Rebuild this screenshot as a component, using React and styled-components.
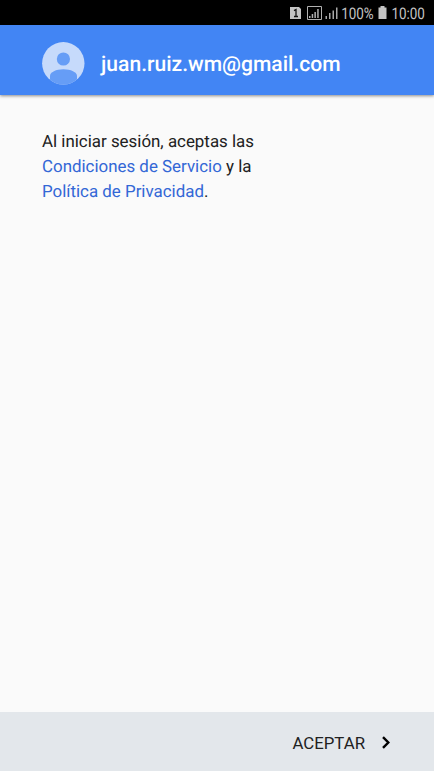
import styled, { createGlobalStyle } from "styled-components";

const GlobalStyle = createGlobalStyle`
    body {
        margin: 0;
        background: #fafafa;
        font-family: Roboto, "Liberation Sans", sans-serif;
    }
`;

const Container = styled.div`
    display: flex;
    flex-direction: column;
    height: 100vh;
    overflow: hidden;
    background: #fafafa;
    text-rendering: geometricPrecision;
`;

const StatusBar = styled.div`
    display: flex;
    align-items: center;
    justify-content: flex-end;
    flex-shrink: 0;
    box-sizing: border-box;
    height: 25px;
    padding: 1px 9px 0 0;
    background: #000;
    color: #c4c4c4;
`;

const StatusIcons = styled.svg`
    display: block;
    flex-shrink: 0;
    margin-right: ${(props) => props.$gap}px;
`;

const StatusText = styled.span`
    display: flex;
    flex-shrink: 0;
    justify-content: flex-end;
    width: ${(props) => props.$width}px;
    margin-right: ${(props) => props.$gap || 0}px;
    padding-top: 2px;
    font-size: 16px;
    line-height: 20px;
    white-space: nowrap;
`;

const Condensed = styled.span`
    flex-shrink: 0;
    transform: scaleX(0.84);
    transform-origin: right center;
`;

const Header = styled.header`
    display: flex;
    align-items: center;
    flex-shrink: 0;
    box-sizing: border-box;
    height: 70px;
    padding: 6px 42px 0;
    background: #4285f4;
    box-shadow: 0 1px 3px rgba(0, 0, 0, 0.45);
`;

const Avatar = styled.svg`
    display: block;
    margin-right: 16px;
`;

const Email = styled.h1`
    margin: 3px 0 0;
    font-size: 21.1px;
    font-weight: 500;
    line-height: 28px;
    color: #fff;
`;

const Content = styled.main`
    flex: 1;
    padding: 35px 42px;
`;

const Terms = styled.p`
    width: 230px;
    margin: 0;
    font-size: 16.9px;
    line-height: 25.2px;
    color: #212121;
`;

const Link = styled.a`
    color: #3367d6;
    text-decoration: none;
`;

const Footer = styled.footer`
    display: flex;
    align-items: center;
    justify-content: flex-end;
    flex-shrink: 0;
    box-sizing: border-box;
    height: 59px;
    padding: 2px 43px 0 0;
    background: #e3e7eb;
`;

const AcceptButton = styled.button`
    display: flex;
    align-items: center;
    gap: 16px;
    padding: 0;
    border: 0;
    background: none;
    font-family: inherit;
    font-size: 16.8px;
    line-height: 24px;
    color: #212121;
`;

const App = () => {
    return (
        <>
            <GlobalStyle />
            <Container>
                <StatusBar>
                    <StatusIcons $gap={2} width="48" height="16" viewBox="0 0 48 16">
                        <path d="M0 2h9l2 2v10H0z" fill="#c4c4c4" />
                        <path d="M4 5.6l2-1.1v7M4 11.5h4" fill="none" stroke="#111" strokeWidth="1.3" />
                        <path d="M17.5 1.5h14v13h-14z" fill="none" stroke="#b0b0b0" />
                        <path
                            d="M19 11h1.5v2H19zM21.7 9h1.5v4h-1.5zM24.4 7h1.5v6h-1.5zM27.2 4h1.5v9h-1.5z"
                            fill="#b0b0b0"
                        />
                        <path
                            d="M35.5 11H37v3h-1.5zM39 8h1.5v6H39zM42.5 5.5H44V14h-1.5zM46 2.5h1.5V14H46z"
                            fill="#a8a8a8"
                        />
                    </StatusIcons>
                    <StatusText $width={34} $gap={4}>
                        <Condensed>100%</Condensed>
                    </StatusText>
                    <StatusIcons $gap={4} width="9" height="14" viewBox="0 0 9 14">
                        <path d="M2.5 0h4v1.5h2V13H.5V1.5h2z" fill="#c4c4c4" />
                    </StatusIcons>
                    <StatusText $width={34}>
                        <Condensed>10:00</Condensed>
                    </StatusText>
                </StatusBar>
                <Header>
                    <Avatar width="43" height="43" viewBox="0 0 43 43">
                        <defs>
                            <clipPath id="avatar">
                                <circle cx="21.3" cy="21.3" r="21.2" />
                            </clipPath>
                        </defs>
                        <g clipPath="url(#avatar)">
                            <path d="M0 0h43v43H0z" fill="#c6dafb" />
                            <circle cx="21.4" cy="17" r="6.6" fill="#669df6" />
                            <path
                                d="M8 43V34C8 30 14 27.2 21.4 27.2S35 30 35 34v9z"
                                fill="#669df6"
                            />
                        </g>
                    </Avatar>
                    <Email>juan.ruiz.wm@gmail.com</Email>
                </Header>
                <Content>
                    <Terms>
                        Al iniciar sesión, aceptas las <Link>Condiciones de Servicio</Link> y la{" "}
                        <Link>Política de Privacidad</Link>.
                    </Terms>
                </Content>
                <Footer>
                    <AcceptButton>
                        ACEPTAR
                        <svg width="10" height="13" viewBox="0 0 10 13">
                            <path d="M2 1.2l5.3 5.3L2 11.8" fill="none" stroke="#000" strokeWidth="2.4" />
                        </svg>
                    </AcceptButton>
                </Footer>
            </Container>
        </>
    );
};

export default App;
